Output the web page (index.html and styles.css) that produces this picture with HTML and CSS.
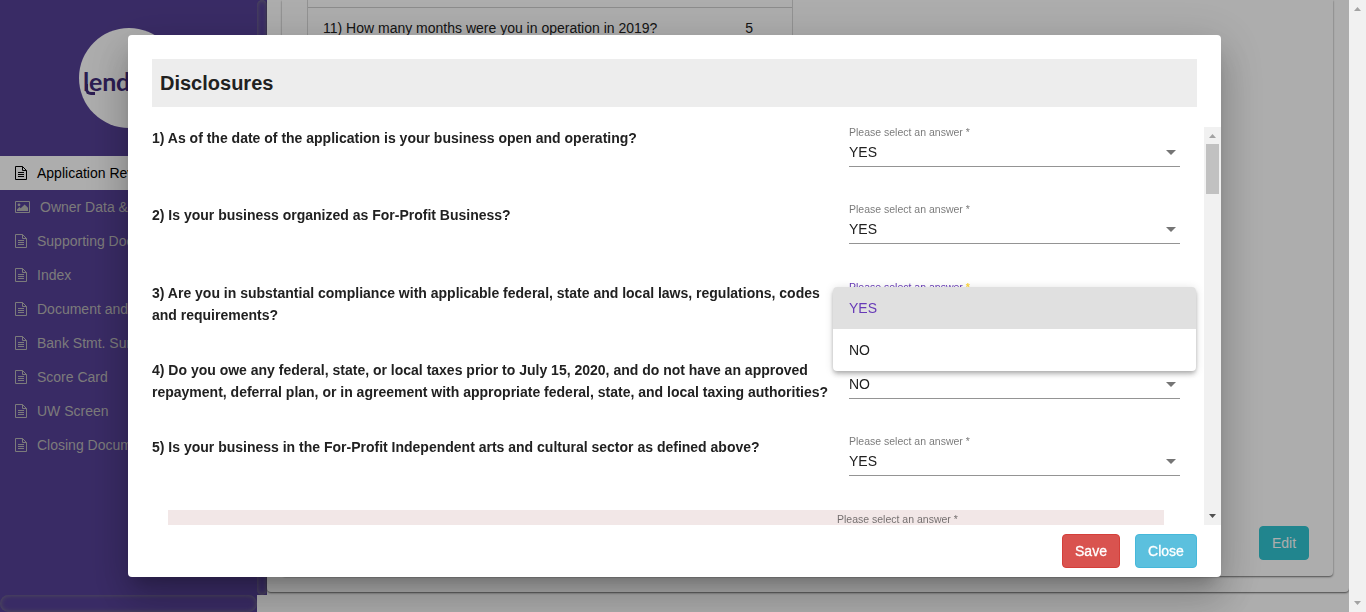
FILE: index.html
```html
<!DOCTYPE html>
<html lang="en">
<head>
<meta charset="utf-8">
<title>Disclosures</title>
<link rel="stylesheet" href="styles.css">
</head>
<body>
<svg width="0" height="0" class="defs">
  <symbol id="doc" viewBox="0 0 12 14"><path d="M.5.5h7l4 4v9H.5zM7.5.5v4h4M3 6.5h6M3 8.5h6M3 10.5h6" fill="none" stroke="currentColor"/></symbol>
  <symbol id="pic" viewBox="0 0 15 12"><path d="M.5.5h14v11H.5z" fill="none" stroke="currentColor"/><circle cx="4" cy="3.8" r="1.4" fill="currentColor"/><path d="M2 10V8.4l2.4-2.3 1.3 1.2L9.6 3.4 13 6.7V10z" fill="currentColor"/></symbol>
</svg>
<div class="page">
  <aside class="sidebar">
    <div class="side-main">
      <div class="brand"><div class="logo">lend</div></div>
      <nav class="nav">
        <a class="item active"><svg class="ic"><use href="#doc"/></svg>Application Review</a>
        <a class="item"><svg class="ic wide"><use href="#pic"/></svg>Owner Data &amp; Images</a>
        <a class="item"><svg class="ic"><use href="#doc"/></svg>Supporting Documents</a>
        <a class="item"><svg class="ic"><use href="#doc"/></svg>Index</a>
        <a class="item"><svg class="ic"><use href="#doc"/></svg>Document and Notes</a>
        <a class="item"><svg class="ic"><use href="#doc"/></svg>Bank Stmt. Summary</a>
        <a class="item"><svg class="ic"><use href="#doc"/></svg>Score Card</a>
        <a class="item"><svg class="ic"><use href="#doc"/></svg>UW Screen</a>
        <a class="item"><svg class="ic"><use href="#doc"/></svg>Closing Documents</a>
      </nav>
    </div>
    <div class="side-v"></div>
    <div class="side-h"></div>
  </aside>
  <main class="content">
    <div class="outer">
      <section class="card">
        <div class="table">
          <div class="tr first"></div>
          <div class="tr"><span>11) How many months were you in operation in 2019?</span><span class="num">5</span></div>
        </div>
        <button class="btn edit">Edit</button>
      </section>
    </div>
  </main>
  <div class="page-scroll"></div>
</div>
<div class="backdrop"></div>
<div class="window-scroll"><i class="up"></i><i class="down"></i></div>
<div class="dialog">
  <h2 class="title">Disclosures</h2>
  <div class="body">
    <div class="questions">
      <div class="row"><p class="q">1) As of the date of the application is your business open and operating?</p>
        <div class="field"><label>Please select an answer *</label><div class="value">YES<i class="caret"></i></div></div></div>
      <div class="row"><p class="q">2) Is your business organized as For-Profit Business?</p>
        <div class="field"><label>Please select an answer *</label><div class="value">YES<i class="caret"></i></div></div></div>
      <div class="row"><p class="q">3) Are you in substantial compliance with applicable federal, state and local laws, regulations, codes<br>and requirements?</p>
        <div class="field focus"><label>Please select an answer <b>*</b></label><div class="menu"><div class="option selected">YES</div><div class="option">NO</div></div></div></div>
      <div class="row"><p class="q">4) Do you owe any federal, state, or local taxes prior to July 15, 2020, and do not have an approved<br>repayment, deferral plan, or in agreement with appropriate federal, state, and local taxing authorities?</p>
        <div class="field"><label></label><div class="value">NO<i class="caret"></i></div></div></div>
      <div class="row"><p class="q">5) Is your business in the For-Profit Independent arts and cultural sector as defined above?</p>
        <div class="field"><label>Please select an answer *</label><div class="value">YES<i class="caret"></i></div></div></div>
      <div class="sub"><label>Please select an answer *</label></div>
    </div>
    <div class="scroll"><i class="up"></i><div class="thumb"></div><i class="down"></i></div>
  </div>
  <div class="actions"><button class="btn save">Save</button><button class="btn close">Close</button></div>
</div>
</body>
</html>
```
FILE: styles.css
```css
* { box-sizing: border-box; }
body {
  margin: 0;
  height: 612px;
  overflow: hidden;
  background: #fff;
  font-family: "Liberation Sans", Arial, sans-serif;
  font-size: 14px;
  color: #212121;
}
.defs { position: absolute; }
.page { display: flex; height: 612px; }

.sidebar {
  width: 267px;
  display: grid;
  grid-template: 595px 17px / 257px 10px;
  background: linear-gradient(#554096, #554096) 0 0 / 257px 612px no-repeat, linear-gradient(#554096, #554096) 257px 0 / 10px 595px no-repeat;
}
.side-main { overflow: hidden; }
.side-v, .side-h {
  box-shadow: inset 0 0 5px rgba(128, 128, 128, .9);
  border-radius: 10px;
}
.brand { height: 156px; padding: 28px 0 0 79px; }
.logo {
  position: relative;
  width: 100px;
  height: 100px;
  padding-left: 4px;
  border-radius: 50%;
  background: #fff;
  color: #402b7a;
  font: 700 25px/106px Lato, sans-serif;
  letter-spacing: -.2px;
}
/* hooked foot under the first letter of the wordmark */
.logo::before {
  content: "";
  position: absolute;
  left: 6px;
  top: 56px;
  width: 7px;
  height: 8px;
  border: solid #402b7a;
  border-width: 0 0 3px 3px;
  border-radius: 0 0 0 6px;
}
.item {
  display: flex;
  align-items: center;
  height: 34px;
  padding-left: 15px;
  color: #b7b5b5;
  font-size: 14px;
  white-space: nowrap;
}
.item.active { background: #fff; color: #000; }
.ic { width: 12px; height: 14px; margin-right: 10px; flex: none; }
.ic.wide { width: 15px; height: 12px; }

.content { width: 1082px; }
.outer {
  height: 592px;
  padding: 0 16px 16px 11px;
  border-radius: 0 0 4px 4px;
  box-shadow: 0 1px 2px rgba(0, 0, 0, .6);
}
.card {
  position: relative;
  height: 576px;
  margin-left: 4px;
  padding-left: 25px;
  border-radius: 0 0 4px 4px;
  box-shadow: 0 1px 2px rgba(0, 0, 0, .55);
}
.table { width: 486px; border: 1px solid #d8d8d8; border-width: 0 1px; }
.tr { display: flex; height: 41px; align-items: center; padding: 0 39px 0 15px; justify-content: space-between; border-top: 1px solid #d0d0d0; }
.tr.first { height: 7px; border: 0; }
.btn { height: 34px; border: 1px solid; border-radius: 4px; font: 14px "Liberation Sans", sans-serif; color: #fff; padding: 0; }
.edit { position: absolute; right: 24px; bottom: 16px; width: 50px; background: #32c5d2; border-color: #32c5d2; }
.backdrop { position: fixed; inset: 0; background: rgba(0, 0, 0, .32); }
.page-scroll { width: 17px; }
.window-scroll {
  position: fixed;
  inset: 0 0 0 auto;
  width: 17px;
  background: #f1f1f1;
  display: flex;
  flex-direction: column;
  align-items: center;
  justify-content: space-between;
  padding: 7px 0;
}
.up, .down { width: 7px; height: 4px; background: #a3a3a3; clip-path: polygon(50% 0, 100% 100%, 0 100%); flex: none; }
.down { clip-path: polygon(0 0, 100% 0, 50% 100%); }

.dialog {
  position: fixed;
  left: 128px;
  top: 35px;
  width: 1093px;
  height: 542px;
  padding: 24px 0 0 24px;
  border-radius: 4px;
  background: #fff;
  box-shadow: 0 11px 15px -7px rgba(0, 0, 0, .2), 0 24px 38px 3px rgba(0, 0, 0, .14), 0 9px 46px 8px rgba(0, 0, 0, .12);
}
.title {
  width: 1045px;
  height: 48px;
  margin: 0 0 20px;
  padding-left: 8px;
  background: #ededed;
  font: 700 20px/48px "Liberation Sans", sans-serif;
}
.body { display: flex; height: 398px; }
.questions { width: 1052px; height: 398px; }
.row { display: grid; grid-template-columns: 697px 331px; height: 77.33px; }
.q { margin: 0; font-weight: 700; font-size: 14px; line-height: 22px; white-space: nowrap; }
.field { position: relative; height: 40px; }
label { display: block; height: 12px; font-size: 10.5px; line-height: 10px; color: rgba(0, 0, 0, .54); }
.value {
  display: flex;
  align-items: center;
  justify-content: space-between;
  height: 28px;
  padding: 0 4px 1px 0;
  border-bottom: 1px solid #949494;
}
.caret { margin-top: 1px; border: 5px solid transparent; border-top-color: #757575; border-bottom: 0; }
.focus label { color: #673ab7; }
.focus b { color: #ffd740; }
.menu {
  position: absolute;
  z-index: 2;
  left: -16px;
  top: 5px;
  width: 363px;
  height: 84px;
  border-radius: 4px;
  overflow: hidden;
  background: #fff;
  box-shadow: 0 2px 4px -1px rgba(0, 0, 0, .2), 0 4px 5px rgba(0, 0, 0, .14), 0 1px 10px rgba(0, 0, 0, .12);
}
.option { height: 42px; padding-left: 16px; line-height: 42px; }
.option.selected { background: #e0e0e0; color: #673ab7; }
.sub { width: 996px; height: 15px; margin: -4px 0 0 16px; padding: 4px 0 0 669px; background: #f2e7e7; overflow: hidden; }
.scroll {
  width: 17px;
  height: 398px;
  padding: 7px 0;
  background: #f1f1f1;
  display: flex;
  flex-direction: column;
  align-items: center;
}
.thumb { width: 13px; height: 50px; margin: 6px 0 auto; background: #c1c1c1; }
.scroll .down { background: #505050; }
.actions { display: flex; justify-content: flex-end; gap: 15px; padding: 9px 24px 0 0; }
.save { width: 58px; background: #d9534f; border-color: #d43f3a; -webkit-text-stroke: .3px; }
.close { width: 62px; background: #5bc0de; border-color: #46b8da; -webkit-text-stroke: .3px; }
```
